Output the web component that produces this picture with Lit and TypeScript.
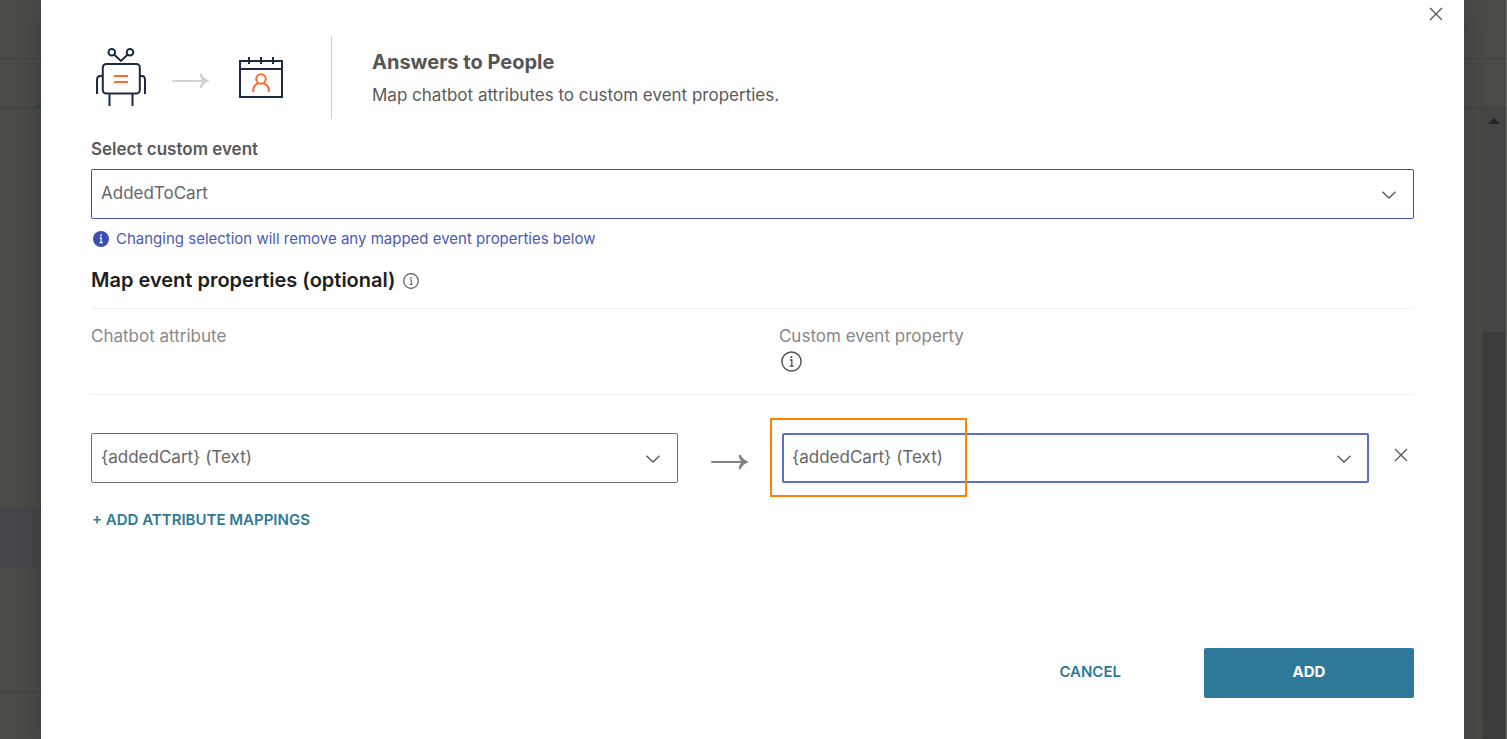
import { LitElement, html, css, svg } from "lit";
import { customElement } from "lit/decorators.js";

const chevron = html`<svg class="chevron" width="14" height="8" viewBox="0 0 14 8" aria-hidden="true">
  <path d="M0.5 0.7 L7 7 L13.5 0.7" fill="none" stroke="#555" stroke-width="1.3" />
</svg>`;

const cross = html`<svg width="14" height="14" viewBox="0 0 14 14" aria-hidden="true">
  <path d="M1 1 L13 13 M13 1 L1 13" fill="none" stroke="#555" stroke-width="1.3" />
</svg>`;

const arrow = html`<svg class="arrow" width="38" height="16" viewBox="0 0 38 16" aria-hidden="true">
  <path d="M1 8 H34" fill="none" stroke="currentColor" stroke-width="2" stroke-linecap="round" />
  <path d="M27.6 1.2 L29.4 0.6 C31 4 34 6.8 38 8 C34 9.2 31 12 29.4 15.4 L27.6 14.8 C28 12 29.2 9.8 31 8 C29.2 6.2 28 4 27.6 1.2 Z" fill="currentColor" />
</svg>`;

const infoOutline = (size: number) => html`<svg width=${size} height=${size} viewBox="0 0 21 21" aria-hidden="true">
  ${svg`<circle cx="10.5" cy="10.5" r="9.6" fill="none" stroke="#555" stroke-width="1.5" />
  <circle cx="10.4" cy="6.2" r="1.1" fill="#555" />
  <path d="M8.8 9 H10.8 V15 M8.8 15 H12.6" fill="none" stroke="#555" stroke-width="1.3" />`}
</svg>`;

@customElement("app-root")
export class AppRoot extends LitElement {
  static styles = css`
    :host {
      display: block;
      font-family: Inter, "Liberation Sans", sans-serif;
      color: #5a5a5a;
    }
    *,
    *::before,
    *::after {
      box-sizing: border-box;
    }
    svg {
      display: block;
      flex: none;
    }
    h1,
    h2,
    p {
      margin: 0;
    }
    button {
      border: 0;
      padding: 0;
      background: none;
      font-family: inherit;
      cursor: pointer;
    }
    .shell {
      display: grid;
      grid-template-columns: 41px 1fr 43px;
      min-height: 100vh;
      background: #4a4a47;
      overflow: hidden;
    }
    .gutter {
      display: flex;
      flex-direction: column;
    }
    .strip {
      height: 59px;
      border-bottom: 1px solid #41413e;
    }
    .strip.tabs {
      height: 49px;
      display: flex;
      align-items: flex-end;
      justify-content: flex-end;
    }
    .active-tab {
      width: 6px;
      height: 2px;
      background: #24493d;
    }
    .selected-row {
      margin-top: 399px;
      height: 60px;
      background: #45464a;
    }
    .list-end {
      height: 126px;
      border-bottom: 1px solid #41413e;
    }
    .right {
      border-right: 1px solid #6a6a67;
    }
    .track {
      flex: 1;
      display: flex;
      flex-direction: column;
      align-items: center;
      margin-left: 17px;
      padding-top: 10px;
      background: #454543;
    }
    .thumb {
      flex: 1;
      align-self: stretch;
      margin: 208px 1px 0 2px;
      background: #3c3c3a;
    }
    .dialog {
      position: relative;
      display: flex;
      flex-direction: column;
      padding: 36px 50px 41px;
      background: #fff;
      box-shadow: 0 8px 24px rgba(0, 0, 0, 0.2);
    }
    .close {
      position: absolute;
      top: 7px;
      right: 21px;
    }
    .intro {
      display: flex;
      align-items: stretch;
    }
    .figures {
      display: flex;
      align-items: flex-start;
      width: 241px;
      height: 83px;
      padding: 11px 0 0 4px;
      border-right: 1px solid #ccc;
    }
    .figures .arrow {
      margin: 26px 29px 0 25px;
      color: #d3d3d3;
    }
    .figures .calendar {
      margin-top: 10px;
    }
    .titles {
      padding: 12px 0 0 40px;
    }
    h1 {
      font-size: 20px;
      line-height: 28px;
      font-weight: 700;
      color: #555;
    }
    .titles p {
      margin-top: 6px;
      font-size: 17px;
      line-height: 26px;
    }
    .label {
      margin-top: 18px;
      font-size: 17px;
      line-height: 24px;
      font-weight: 600;
    }
    .field {
      position: relative;
    }
    .field select {
      display: block;
      width: 100%;
      height: 50px;
      padding: 0 40px 2px 9px;
      border: 1px solid #6e6e6e;
      border-radius: 2px;
      background: #fff;
      appearance: none;
      font-family: inherit;
      font-size: 17px;
      color: #666;
    }
    .field .chevron {
      position: absolute;
      top: 22px;
      right: 18px;
      pointer-events: none;
    }
    .field.event {
      margin-top: 8px;
    }
    .field.event select {
      border-color: #3f51b5;
    }
    .field.focused select {
      border: 2px solid #5c6fc4;
      padding-left: 8px;
    }
    .highlight {
      position: absolute;
      top: -15px;
      left: -12px;
      width: 197px;
      height: 79px;
      border: 2px solid #ff8200;
      pointer-events: none;
    }
    .notice {
      display: flex;
      align-items: center;
      gap: 7px;
      margin: 8px 0 0 2px;
      font-size: 15px;
      line-height: 24px;
      color: #4a5ab8;
    }
    h2 {
      display: flex;
      align-items: center;
      gap: 8px;
      margin-top: 15px;
      padding-bottom: 14px;
      border-bottom: 1px solid #f0f0f0;
      font-size: 20px;
      line-height: 28px;
      font-weight: 600;
      color: #1e1e1e;
    }
    h2 svg {
      margin-top: 2px;
    }
    .heads {
      display: grid;
      grid-template-columns: 52% 1fr;
      padding: 15px 0 22px;
      border-bottom: 1px solid #f0f0f0;
      font-size: 17px;
      line-height: 24px;
      color: #888;
    }
    .heads svg {
      margin: 3px 0 0 2px;
    }
    .mapping {
      display: grid;
      grid-template-columns: 1fr 104px 1fr 45px;
      margin-top: 38px;
    }
    .mapping > .arrow {
      margin: 21px 0 0 33px;
      color: #828282;
    }
    .remove {
      align-self: center;
      justify-self: end;
      margin: 0 6px 6px 0;
    }
    .link {
      font-size: 15px;
      line-height: 24px;
      font-weight: 600;
      color: #2e7999;
    }
    .more {
      align-self: flex-start;
      margin: 25px 0 0 1px;
    }
    .actions {
      display: flex;
      justify-content: flex-end;
      align-items: center;
      gap: 83px;
      margin-top: auto;
      padding-top: 40px;
    }
    .actions .link,
    .primary {
      height: 50px;
      padding-bottom: 3px;
    }
    .primary {
      width: 210px;
      border-radius: 2px;
      background: #2e7999;
      color: #fff;
      font-size: 15px;
      font-weight: 700;
    }
  `;

  render() {
    return html`
      <div class="shell">
        <div class="gutter">
          <div class="strip"></div>
          <div class="strip tabs"><span class="active-tab"></span></div>
          <div class="selected-row"></div>
          <div class="list-end"></div>
        </div>

        <main class="dialog" role="dialog" aria-labelledby="title">
          <button class="close" aria-label="Close">${cross}</button>

          <header class="intro">
            <div class="figures">
              <svg width="52" height="60" viewBox="0 0 52 60" fill="none" stroke="#1d2a44" stroke-width="2" aria-hidden="true">
                <circle cx="16.8" cy="5.3" r="3.3" />
                <circle cx="35" cy="5.3" r="3.3" />
                <path d="M19.3 7.8 L26 14 L32.5 7.8" />
                <rect x="7.8" y="17" width="37" height="29.5" rx="3.5" />
                <path d="M8 29 H5.5 Q2 29 2 33 V47 M45 29 H47 Q50 29 50 33 V47 M14.5 46.5 V59 M37.5 46.5 V59" />
                <path d="M19 29 H33 M19 35 H33" stroke="#ff6a2b" />
              </svg>
              ${arrow}
              <svg class="calendar" width="44" height="42" viewBox="0 0 44 42" fill="none" stroke="#1d2a44" stroke-width="2" aria-hidden="true">
                <rect x="1" y="4" width="42" height="36" />
                <path d="M1 12 H43 M10 0 V7 M22 0 V7 M34 0 V7" />
                <g stroke="#ff6a2b">
                  <circle cx="22" cy="22" r="4.8" />
                  <path d="M14.2 35 V33.5 C14.2 29.5 17 27.2 19.4 26.4 M24.6 26.4 C27 27.2 29.8 29.5 29.8 33.5 V35" />
                </g>
              </svg>
            </div>
            <div class="titles">
              <h1 id="title">Answers to People</h1>
              <p>Map chatbot attributes to custom event properties.</p>
            </div>
          </header>

          <label class="label" for="event">Select custom event</label>
          <div class="field event">
            <select id="event"><option>AddedToCart</option></select>
            ${chevron}
          </div>
          <p class="notice">
            <svg width="16" height="16" viewBox="0 0 16 16" aria-hidden="true">
              <circle cx="8" cy="8" r="8" fill="#3a4fb0" />
              <circle cx="8" cy="4.3" r="1" fill="#fff" />
              <path d="M6.6 6.8 H8.2 V11.6 M6.4 11.6 H9.8" fill="none" stroke="#fff" stroke-width="1.2" />
            </svg>
            Changing selection will remove any mapped event properties below
          </p>

          <h2>Map event properties (optional) ${infoOutline(16)}</h2>
          <div class="heads">
            <label for="attribute">Chatbot attribute</label>
            <div><label for="property">Custom event property</label>${infoOutline(21)}</div>
          </div>

          <div class="mapping">
            <div class="field">
              <select id="attribute"><option>{addedCart} (Text)</option></select>
              ${chevron}
            </div>
            ${arrow}
            <div class="field focused">
              <select id="property"><option>{addedCart} (Text)</option></select>
              ${chevron}
              <span class="highlight"></span>
            </div>
            <button class="remove" aria-label="Remove mapping">${cross}</button>
          </div>
          <button class="link more">+ ADD ATTRIBUTE MAPPINGS</button>

          <footer class="actions">
            <button class="link">CANCEL</button>
            <button class="primary">ADD</button>
          </footer>
        </main>

        <div class="gutter right">
          <div class="strip"></div>
          <div class="strip tabs"></div>
          <div class="track">
            <svg width="12" height="6" viewBox="0 0 12 6" aria-hidden="true"><path d="M0 6 L6 0 L12 6 Z" fill="#242423" /></svg>
            <div class="thumb"></div>
          </div>
        </div>
      </div>
    `;
  }
}
